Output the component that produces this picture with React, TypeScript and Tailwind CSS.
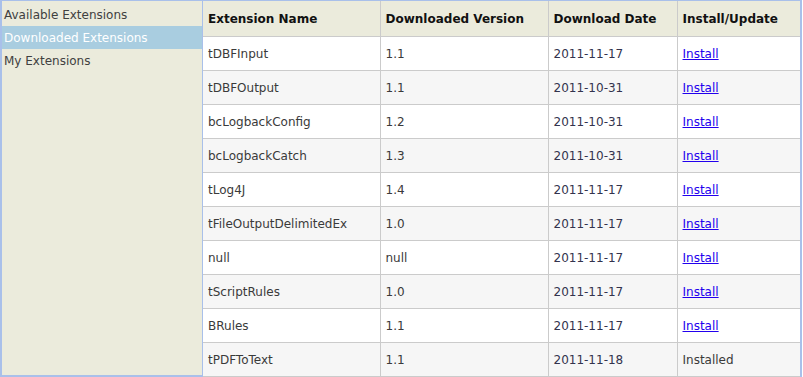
const ROWS = [
  { name: "tDBFInput", version: "1.1", date: "2011-11-17", installed: false },
  { name: "tDBFOutput", version: "1.1", date: "2011-10-31", installed: false },
  { name: "bcLogbackConfig", version: "1.2", date: "2011-10-31", installed: false },
  { name: "bcLogbackCatch", version: "1.3", date: "2011-10-31", installed: false },
  { name: "tLog4J", version: "1.4", date: "2011-11-17", installed: false },
  { name: "tFileOutputDelimitedEx", version: "1.0", date: "2011-11-17", installed: false },
  { name: "null", version: "null", date: "2011-11-17", installed: false },
  { name: "tScriptRules", version: "1.0", date: "2011-11-17", installed: false },
  { name: "BRules", version: "1.1", date: "2011-11-17", installed: false },
  { name: "tPDFToText", version: "1.1", date: "2011-11-18", installed: true },
];

const MENU = ["Available Extensions", "Downloaded Extensions", "My Extensions"];

export default function App() {
  return (
    <div
      className="flex h-[377px] w-[802px] border-t border-b-2 border-l-2 border-r-2 border-[#a9c0ea] bg-white text-[12px] text-[#3a3a3a]"
      style={{ fontFamily: "'DejaVu Sans', Verdana, sans-serif" }}
    >
      {/* Sidebar */}
      <div className="w-[201px] shrink-0 border-r border-[#a9c0ea] bg-[#ebebdc] pt-[2px]">
        {MENU.map((item, i) => (
          <div
            key={item}
            className={
              i === 1
                ? "flex h-[23px] items-center bg-[#a9cde0] pl-[2px] text-white"
                : "flex h-[23px] items-center pl-[2px] text-[#404040]"
            }
          >
            {item}
          </div>
        ))}
      </div>

      {/* Table */}
      <table className="flex-1 border-collapse self-start">
        <colgroup>
          <col className="w-[177px]" />
          <col className="w-[168px]" />
          <col className="w-[129px]" />
          <col />
        </colgroup>
        <thead>
          <tr className="h-[35px] bg-[#ebebdc] text-left text-[#111]">
            <th className="border-r border-b border-[#cbcbcb] pl-[5px] pt-[2px] font-bold">Extension Name</th>
            <th className="border-r border-b border-[#cbcbcb] pl-[5px] pt-[2px] font-bold">Downloaded Version</th>
            <th className="border-r border-b border-[#cbcbcb] pl-[5px] pt-[2px] font-bold">Download Date</th>
            <th className="border-b border-[#cbcbcb] pl-[5px] pt-[2px] font-bold">Install/Update</th>
          </tr>
        </thead>
        <tbody>
          {ROWS.map((row, i) => (
            <tr
              key={row.name}
              className={i % 2 === 0 ? "h-[34px] bg-white" : "h-[34px] bg-[#f6f6f6]"}
            >
              <td className="border-r border-b border-[#cbcbcb] pl-[5px] pt-[2px]">{row.name}</td>
              <td className="border-r border-b border-[#cbcbcb] pl-[5px] pt-[2px]">{row.version}</td>
              <td className="border-r border-b border-[#cbcbcb] pl-[5px] pt-[2px] text-[#33334d]">{row.date}</td>
              <td className="border-b border-[#cbcbcb] pl-[5px] pt-[2px]">
                {row.installed ? (
                  <span>Installed</span>
                ) : (
                  <a href="#" className="text-[#2200ee] underline">
                    Install
                  </a>
                )}
              </td>
            </tr>
          ))}
        </tbody>
      </table>
    </div>
  );
}
